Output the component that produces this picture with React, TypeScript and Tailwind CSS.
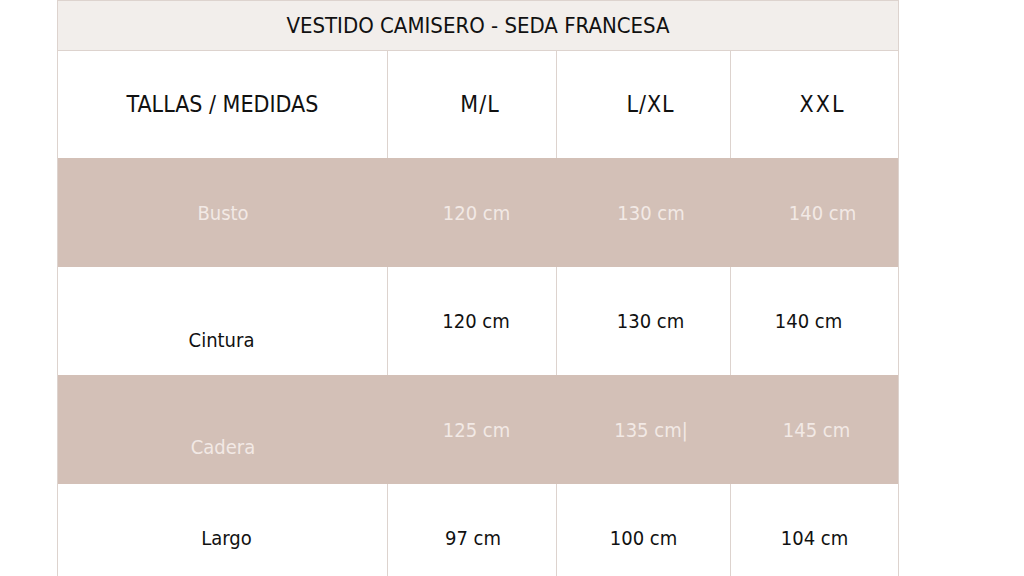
import React from 'react'

const FONT = { fontFamily: '"Liberation Sans Narrow", "DejaVu Sans Condensed", Roboto, sans-serif' }

type Cell = { t: string; cls?: string }
type Row = { tan: boolean; h: string; cells: Cell[]; weight: string }

const COLS = 'grid grid-cols-[330px_169px_174px_167px]'

const ROWS: Row[] = [
  {
    tan: true,
    h: 'h-[109px]',
    weight: 'font-light',
    cells: [{ t: 'Busto' }, { t: '120 cm', cls: 'pl-[8px]' }, { t: '130 cm', cls: 'pl-[14px]' }, { t: '140 cm', cls: 'pl-[16px]' }],
  },
  {
    tan: false,
    h: 'h-[108px]',
    weight: 'font-normal',
    cells: [{ t: 'Cintura', cls: 'pt-[38px] pr-[2px]' }, { t: '120 cm', cls: 'pl-[8px]' }, { t: '130 cm', cls: 'pl-[14px]' }, { t: '140 cm', cls: 'pr-[12px]' }],
  },
  {
    tan: true,
    h: 'h-[109px]',
    weight: 'font-light',
    cells: [{ t: 'Cadera', cls: 'pt-[34px]' }, { t: '125 cm', cls: 'pl-[8px]' }, { t: '135 cm|', cls: 'pl-[14px]' }, { t: '145 cm', cls: 'pl-[4px]' }],
  },
  {
    tan: false,
    h: 'h-[108px]',
    weight: 'font-normal',
    cells: [{ t: 'Largo', cls: 'pl-[8px]' }, { t: '97 cm', cls: 'pl-[2px]' }, { t: '100 cm' }, { t: '104 cm', cls: 'pl-[0px]' }],
  },
]

export default function App() {
  return (
    <div className="h-[576px] w-[1024px] overflow-hidden bg-white" style={FONT}>
      <div className="ml-[57px] w-[842px] border-x border-t border-[#ddd3ce]">
        <div className="flex h-[50px] items-center justify-center border-b border-[#ddd3ce] bg-[#f2eeeb] text-[22px] font-medium text-[#111]">
          VESTIDO CAMISERO - SEDA FRANCESA
        </div>
        <div className={`${COLS} h-[107px] text-[23px] font-medium text-[#111]`}>
          <div className="flex items-center justify-center border-r border-[#ddd3ce]">TALLAS / MEDIDAS</div>
          <div className="flex items-center justify-center border-r border-[#ddd3ce] pl-[16px] tracking-[1px]">M/L</div>
          <div className="flex items-center justify-center border-r border-[#ddd3ce] pl-[14px] tracking-[1px]">L/XL</div>
          <div className="flex items-center justify-center pl-[16px] tracking-[2px]">XXL</div>
        </div>
        {ROWS.map((r, i) => (
          <div
            key={i}
            className={`${COLS} ${r.h} text-[20px] ${r.weight} ${r.tan ? 'bg-[#d3c0b7] text-[#f2e9e5]' : 'bg-white text-[#111]'}`}
          >
            {r.cells.map((c, j) => (
              <div
                key={j}
                className={`flex items-center justify-center ${!r.tan && j < 3 ? 'border-r border-[#ddd3ce]' : ''} ${c.cls ?? ''}`}
              >
                {c.t}
              </div>
            ))}
          </div>
        ))}
      </div>
    </div>
  )
}
